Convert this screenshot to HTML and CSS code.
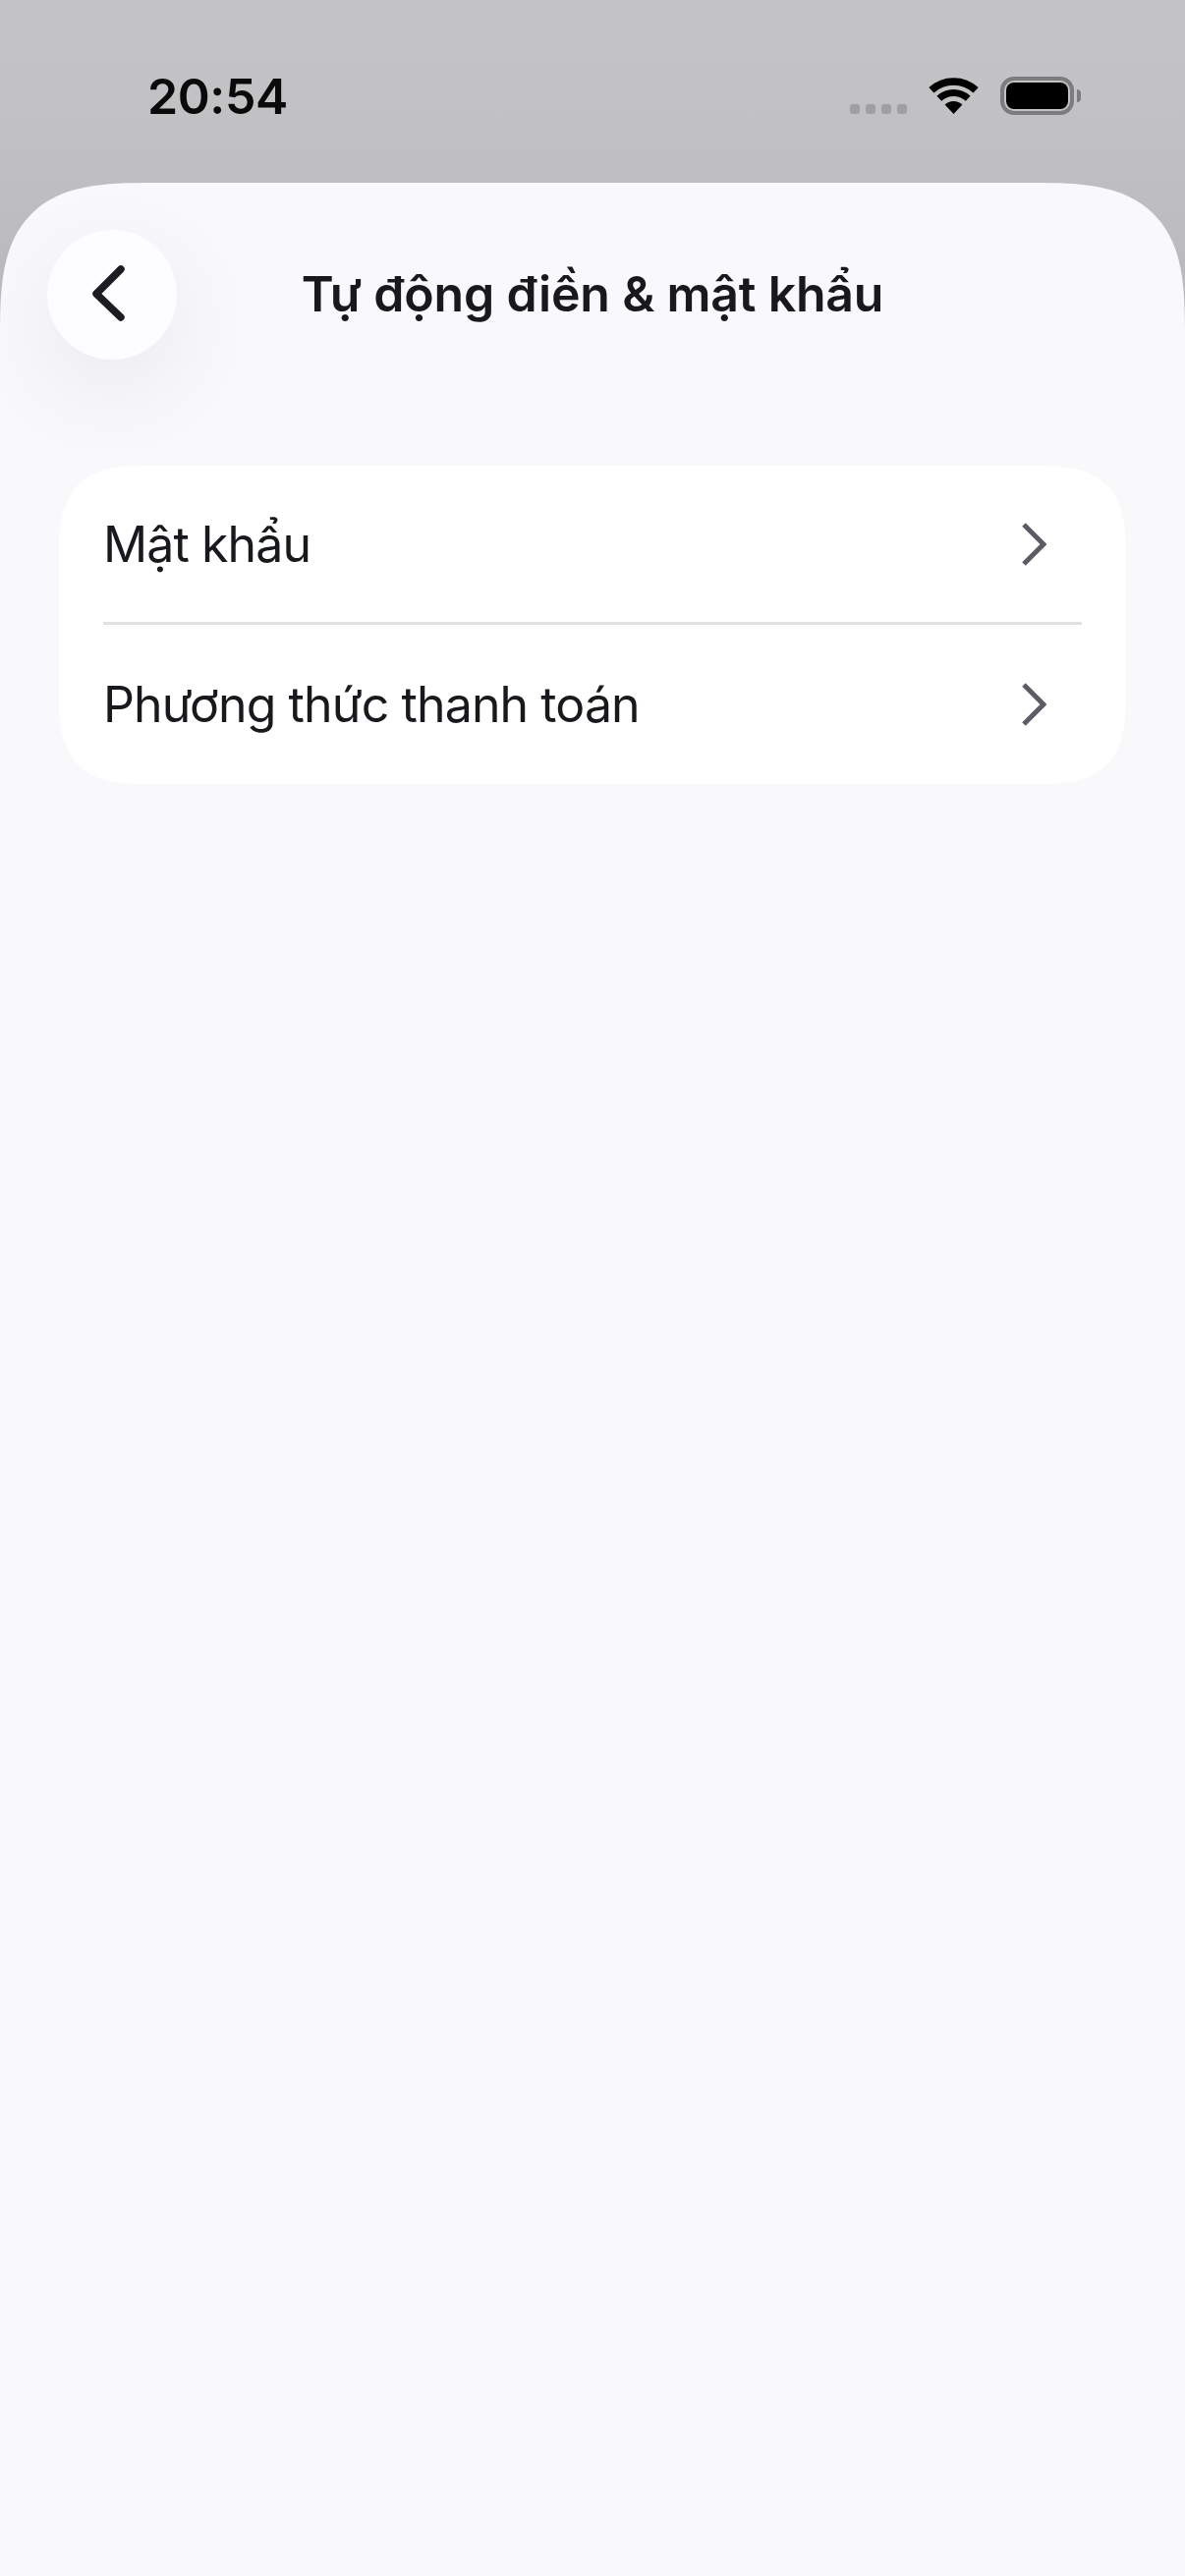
FILE: index.html
```html
<!DOCTYPE html>
<html lang="vi">
<head>
  <meta charset="UTF-8" />
  <meta name="viewport" content="width=device-width, initial-scale=1" />
  <title>Tự động điền &amp; mật khẩu</title>
  <link rel="stylesheet" href="styles.css">
</head>
<body>
  <div class="screen">
    <header class="status-bar">
      <span class="status-time">20:54</span>
      <div class="status-icons">
        <div class="signal-dots">
          <span class="signal-dot"></span>
          <span class="signal-dot"></span>
          <span class="signal-dot"></span>
          <span class="signal-dot"></span>
        </div>
        <svg class="wifi-icon" width="51" height="37" viewBox="0 0 51 37" aria-hidden="true">
          <path d="M2.9 12.8A33.2 33.2 0 0 1 48.1 12.8" fill="none" stroke="#000" stroke-width="7.5" />
          <path d="M10.8 21.3A21.5 21.5 0 0 1 40.2 21.3" fill="none" stroke="#000" stroke-width="7" />
          <path d="M25.5 37L16.6 27.5A13 13 0 0 1 34.4 27.5Z" fill="#000" />
        </svg>
        <div class="battery">
          <div class="battery-body"><div class="battery-level"></div></div>
          <div class="battery-nub"></div>
        </div>
      </div>
    </header>

    <main class="sheet">
      <div class="sheet-header">
        <button class="back-btn" type="button" aria-label="Quay lại">
          <svg width="40" height="66" viewBox="0 0 40 66" aria-hidden="true">
            <path d="M32 7L7 32L32 56" fill="none" stroke="#1c1c22" stroke-width="7.5" stroke-linecap="round" stroke-linejoin="round" />
          </svg>
        </button>
        <h1 class="sheet-title">Tự động điền &amp; mật khẩu</h1>
      </div>

      <ul class="menu-card">
        <li class="menu-row">
          <span class="menu-label">Mật khẩu</span>
          <svg class="menu-chevron" width="26" height="46" viewBox="0 0 26 46" aria-hidden="true">
            <path d="M3 3L23 23L3 43" fill="none" stroke="#5c5c66" stroke-width="5" />
          </svg>
        </li>
        <li class="menu-row">
          <span class="menu-label">Phương thức thanh toán</span>
          <svg class="menu-chevron" width="26" height="46" viewBox="0 0 26 46" aria-hidden="true">
            <path d="M3 3L23 23L3 43" fill="none" stroke="#5c5c66" stroke-width="5" />
          </svg>
        </li>
      </ul>
    </main>
  </div>
</body>
</html>
```

FILE: styles.css
```css
body, html {
  height: 100%;
  margin: 0;
  padding: 0;
}
body {
  font-family: Inter, "Noto Sans", sans-serif;
  color: #18181d;
}
.screen {
  display: flex;
  flex-direction: column;
  height: 2622px;
  overflow: hidden;
  background: linear-gradient(180deg, #c4c4c6 0%, #c2c2c4 100px, #bababc 300px);
}

/* status bar */
.status-bar {
  height: 186px;
  flex: none;
  box-sizing: border-box;
  padding: 70px 106px 0 150px;
  display: flex;
  justify-content: space-between;
  align-items: flex-start;
}
.status-time {
  font-size: 50px;
  line-height: 56px;
  font-weight: 600;
  letter-spacing: -0.4px;
  color: #0a0a0a;
}
.status-icons {
  display: flex;
  align-items: flex-start;
  padding-top: 8px;
}
.signal-dots {
  display: flex;
  gap: 6px;
  margin: 28px 22px 0 0;
}
.signal-dot {
  width: 10px;
  height: 10px;
  border-radius: 3px;
  background: #9f9fa1;
}
.wifi-icon {
  display: block;
  margin: 1px 22px 0 0;
}
.battery {
  display: flex;
  align-items: center;
  gap: 3px;
}
.battery-body {
  box-sizing: border-box;
  width: 75px;
  height: 39px;
  padding: 2px;
  border: 4px solid #7c7c7e;
  border-radius: 14px;
}
.battery-level {
  height: 100%;
  border-radius: 8px;
  background: #000;
}
.battery-nub {
  width: 4px;
  height: 13px;
  border-radius: 0 4px 4px 0;
  background: #7c7c7e;
}

/* sheet */
.sheet {
  flex: 1;
  box-sizing: border-box;
  padding: 48px 60px 0;
  background: #f9f9fb;
  border-radius: 156px 156px 0 0;
  corner-shape: superellipse(1.6);
}
.sheet-header {
  display: grid;
  grid-template-columns: 132px 1fr 132px;
  align-items: center;
  margin-left: -12px;
  margin-right: -12px;
}
.back-btn {
  width: 132px;
  height: 132px;
  padding: 0;
  border: none;
  border-radius: 50%;
  background: #fdfdff;
  box-shadow: 0 30px 100px rgba(0, 0, 0, 0.07);
  display: flex;
  align-items: center;
  justify-content: center;
}
.back-btn svg {
  display: block;
  margin-right: 6px;
}
.sheet-title {
  margin: 0 0 3px;
  text-align: center;
  font-size: 50px;
  line-height: 60px;
  font-weight: 600;
  letter-spacing: -0.2px;
  color: #18181d;
}

/* menu */
.menu-card {
  list-style: none;
  margin: 108px 0 0;
  padding: 0 45px;
  background: #fff;
  border-radius: 96px;
  corner-shape: superellipse(1.6);
}
.menu-row {
  height: 162px;
  box-sizing: border-box;
  display: flex;
  align-items: center;
  justify-content: space-between;
}
.menu-row:first-child {
  border-bottom: 3px solid #e0e0e6;
}
.menu-label {
  font-size: 50px;
  line-height: 60px;
  font-weight: 400;
  letter-spacing: -0.9px;
}
.menu-chevron {
  display: block;
  margin-right: 36px;
}
```
